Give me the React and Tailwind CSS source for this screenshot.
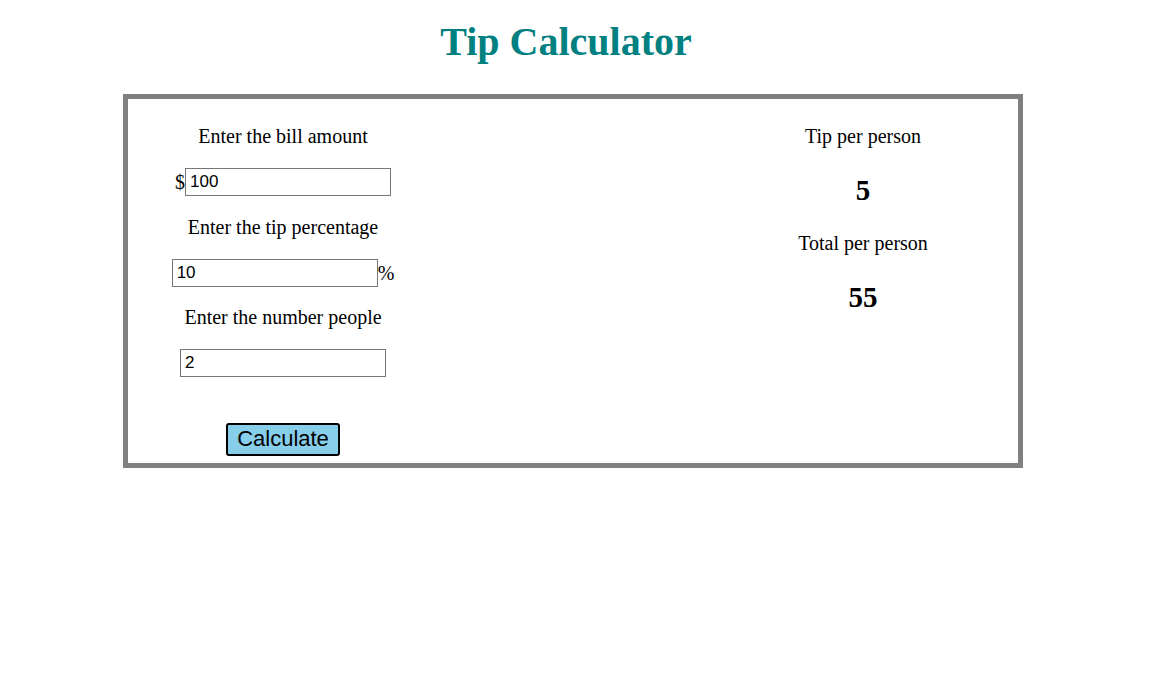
export default function App() {
  return (
    <div className="min-h-screen bg-white font-['Liberation_Serif',serif] text-black">
      <h1 className="pr-[20px] pt-[19px] text-center text-[40px] font-bold leading-[46px] text-[#008080]">
        Tip Calculator
      </h1>

      <div className="ml-[123px] mt-[29px] flex w-[900px] justify-between border-[5px] border-[#808080] pb-[7px]">
        {/* inputs */}
        <div className="flex w-[310px] flex-col items-center pt-[26px]">
          <p className="text-[20px] leading-[23px]">Enter the bill amount</p>
          <div className="mt-[20px] flex items-center">
            <span className="text-[20px] leading-[23px]">$</span>
            <input
              defaultValue="100"
              className="h-[28px] w-[206px] border border-[#767676] px-[4px] font-['Liberation_Sans',sans-serif] text-[17px]"
            />
          </div>

          <p className="mt-[20px] text-[20px] leading-[23px]">Enter the tip percentage</p>
          <div className="mt-[20px] flex items-center">
            <input
              defaultValue="10"
              className="h-[28px] w-[206px] border border-[#767676] px-[4px] font-['Liberation_Sans',sans-serif] text-[17px]"
            />
            <span className="text-[20px] leading-[23px]">%</span>
          </div>

          <p className="mt-[19px] text-[20px] leading-[23px]">Enter the number people</p>
          <input
            defaultValue="2"
            className="mt-[20px] h-[28px] w-[206px] border border-[#767676] px-[4px] font-['Liberation_Sans',sans-serif] text-[17px]"
          />

          <button className="mt-[46px] h-[33px] w-[114px] rounded-[3px] border-2 border-black bg-[#87ceeb] pb-[1px] font-['Liberation_Sans',sans-serif] text-[22px] leading-none">
            Calculate
          </button>
        </div>

        {/* results */}
        <div className="mr-[5px] flex w-[300px] flex-col items-center pt-[26px]">
          <p className="text-[20px] leading-[23px]">Tip per person</p>
          <p className="mt-[26px] text-[29px] font-bold leading-[32px]">5</p>
          <p className="mt-[26px] text-[20px] leading-[23px]">Total per person</p>
          <p className="mt-[26px] text-[29px] font-bold leading-[32px]">55</p>
        </div>
      </div>
    </div>
  );
}
